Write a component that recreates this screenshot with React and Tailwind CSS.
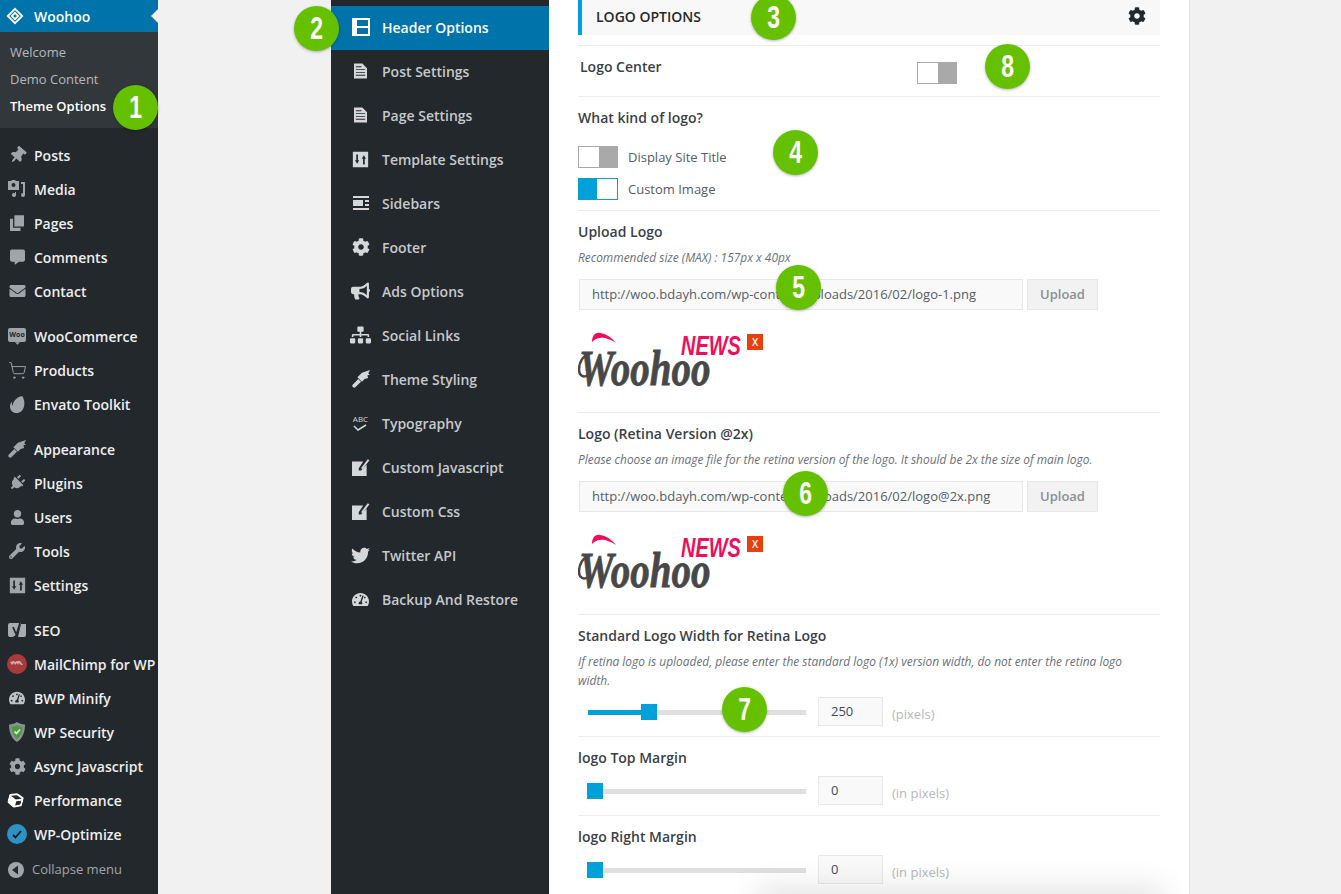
import React from 'react';
import {
  FaThumbtack, FaCommentAlt, FaEnvelope, FaPlug, FaUser, FaWrench, FaTachometerAlt,
  FaCog, FaBullhorn, FaSitemap, FaTwitter, FaCube,
} from 'react-icons/fa';
import { ShoppingCart } from 'lucide-react';

const Sliders = () => (
  <svg viewBox="0 0 20 20" className="w-[17px] h-[17px]">
    <path fill="currentColor" fillRule="evenodd" d="M1 1h18v18H1z M5 4v7H3.5L6 15l2.5-4H7V4z M13 16v-7h-1.5L14 5l2.5 4H15v7z" />
  </svg>
);

const Doc = () => (
  <svg viewBox="0 0 14 16" className="w-[13px] h-[16px]">
    <path fill="currentColor" fillRule="evenodd" d="M0 0h9l5 5v11H0z M2 3v1h6V3z M2 6v1h10V6z M2 9v1h10V9z M2 12v1h10v-1z" />
  </svg>
);

const Edit = () => (
  <svg viewBox="0 0 16 16" className="w-[18px] h-[18px]">
    <path fill="currentColor" d="M0 3h10L6 9v2h2l5-5v10H0z" />
    <path fill="currentColor" d="M8 9l6-8 1.5 1-6 8z" />
  </svg>
);

const Brush = () => (
  <svg viewBox="0 0 20 20" className="w-[18px] h-[18px]">
    <path fill="currentColor" d="M1 16l6-6 3 3-6 6a2 2 0 01-3-3z M6 8l5-5 9-3-2 4 2 1-3 1 1 3-4 1-3 3z" />
  </svg>
);

const Cards = () => (
  <svg viewBox="0 0 16 18" className="w-[14px] h-[16px]">
    <path fill="currentColor" d="M5 0h11v13H5z M0 4h3.5v10.5H12V18H0z" />
  </svg>
);

const Media = () => (
  <svg viewBox="0 0 18 18" className="w-[18px] h-[18px]">
    <path fill="currentColor" fillRule="evenodd" d="M0 1h3l1-1h3l1 1h3v9H0z M5.5 3a2 2 0 100 4 2 2 0 000-4z" />
    <path fill="currentColor" d="M13 2h4v13a2 2 0 11-2-2V4h-2z M7 12l1 0v3a2 2 0 11-1-1.700z" />
  </svg>
);

const Woo = () => (
  <span className="flex flex-col items-center">
    <span className="w-[18px] h-[14px] rounded-[2px] bg-[#9ea3a8] text-[#23282d] text-[7px] font-bold leading-[14px] text-center">Woo</span>
    <svg viewBox="0 0 6 3" className="w-[5px] h-[3px]"><path fill="#9ea3a8" d="M0 0h6L3 3z" /></svg>
  </span>
);

const Leaf = () => (
  <svg viewBox="0 0 16 18" className="w-[15px] h-[17px]">
    <path fill="currentColor" d="M13 0c2 3 3 7 2 11-1 4-4 7-8 7-4 0-7-3-7-7 0-2 1-4 2-5 0 2 0 4 1 4 0-4 4-9 10-10z" />
  </svg>
);

const Seo = () => (
  <svg viewBox="0 0 18 20" className="w-[18px] h-[20px]">
    <path fill="#a8abae" d="M2 3h11l-5 14H2a2 2 0 01-2-2V5a2 2 0 012-2z M13 4h5v11a2 2 0 01-2 2h-6z" />
    <path fill="none" stroke="#23282d" strokeWidth="1.8" d="M5 7l3 7 M12 3l-4 13-3 2" />
  </svg>
);

const Chimp = () => (
  <svg viewBox="0 0 20 20" className="w-[20px] h-[20px]">
    <circle cx="10" cy="10" r="10" fill="#a83a3c" />
    <path fill="#cfa9a9" d="M3 8l4-1 1 1 2-1 3 0 3 4h-2l-2-2-1 2-1-2-2 2-1-2-2 2z" />
  </svg>
);

const Shield = () => (
  <svg viewBox="0 0 16 20" className="w-[16px] h-[20px]">
    <path fill="#8b9094" d="M8 0c2 1.5 5 2.5 8 2.5C16 11 13 17 8 20 3 17 0 11 0 2.5 3 2.5 6 1.5 8 0z" />
    <path fill="#4c9a3c" d="M8 3c1.5 1 3 1.5 5.5 2C13 10 11.5 14.5 8 17 4.5 14.5 3 10 2.5 5 5 4.5 6.5 4 8 3z" />
    <path fill="none" stroke="#d7e8d3" strokeWidth="1.8" d="M5.5 9.5l2 2 3.5-4" />
  </svg>
);

const Optimize = () => (
  <svg viewBox="0 0 20 20" className="w-[20px] h-[20px]">
    <circle cx="10" cy="10" r="10" fill="#2d93c4" />
    <path fill="none" stroke="#14181c" strokeWidth="1.8" d="M6 11l2.5 2.5L14 7" />
  </svg>
);

const CollapseIcon = () => (
  <svg viewBox="0 0 16 16" className="w-[16px] h-[16px]">
    <circle cx="8" cy="8" r="8" fill="#a0a5aa" />
    <path fill="#23282d" d="M10 3.5v9L4 8z" />
  </svg>
);

const HeaderIcon = () => (
  <svg viewBox="0 0 18 18" className="w-[18px] h-[18px]">
    <path fill="currentColor" fillRule="evenodd" d="M0 0h18v18H0z M5 2v6h11V2z M5 10v6h11v-6z" />
  </svg>
);

const SidebarsIcon = () => (
  <svg viewBox="0 0 16 14" className="w-[16px] h-[14px]">
    <path fill="currentColor" d="M0 0h16v2H0z M0 4h10v6H0z M12 4h4v2h-4z M12 8h4v2h-4z M0 12h16v2H0z" />
  </svg>
);

const Abc = () => (
  <span className="flex flex-col items-center leading-none">
    <span className="text-[8px] font-normal h-[9px]">ABC</span>
    <svg viewBox="0 0 14 7" className="w-[14px] h-[7px]"><path fill="none" stroke="currentColor" strokeWidth="1.5" d="M1 2l4 4 8-5" /></svg>
  </span>
);

// wp admin menu, split in groups
const menuGroups = [
  [
    ['Posts', <FaThumbtack className="w-[17px] h-[17px] rotate-[40deg]" />],
    ['Media', <Media />],
    ['Pages', <Cards />],
    ['Comments', <FaCommentAlt className="w-[15px] h-[16px]" />],
    ['Contact', <FaEnvelope className="w-[17px] h-[16px]" />],
  ],
  [
    ['WooCommerce', <Woo />],
    ['Products', <ShoppingCart className="w-[19px] h-[19px]" strokeWidth={1.2} />],
    ['Envato Toolkit', <Leaf />],
  ],
  [
    ['Appearance', <Brush />],
    ['Plugins', <FaPlug className="w-[16px] h-[16px] rotate-[45deg]" />],
    ['Users', <FaUser className="w-[15px] h-[15px]" />],
    ['Tools', <FaWrench className="w-[16px] h-[16px]" />],
    ['Settings', <Sliders />],
  ],
  [
    ['SEO', <Seo />],
    ['MailChimp for WP', <Chimp />],
    ['BWP Minify', <FaTachometerAlt className="w-[16px] h-[16px] text-[#c0c3c6]" />],
    ['WP Security', <Shield />],
    ['Async Javascript', <FaCog className="w-[17px] h-[17px]" />],
    ['Performance', <FaCube className="w-[15px] h-[15px] text-white -ml-[4px] rotate-[15deg]" />],
    ['WP-Optimize', <Optimize />],
  ],
];

const panelItems = [
  ['Post Settings', <Doc />],
  ['Page Settings', <Doc />],
  ['Template Settings', <Sliders />],
  ['Sidebars', <SidebarsIcon />],
  ['Footer', <FaCog className="w-[18px] h-[18px]" />],
  ['Ads Options', <FaBullhorn className="w-[19px] h-[18px]" />],
  ['Social Links', <FaSitemap className="w-[21px] h-[18px]" />],
  ['Theme Styling', <Brush />],
  ['Typography', <Abc />],
  ['Custom Javascript', <Edit />],
  ['Custom Css', <Edit />],
  ['Twitter API', <FaTwitter className="w-[19px] h-[19px]" />],
  ['Backup And Restore', <FaTachometerAlt className="w-[17px] h-[17px]" />],
];

const Badge = ({ n, className }) => (
  <div className={`absolute w-[45px] h-[45px] rounded-full bg-[#65c100] shadow-[0_1px_3px_rgba(0,0,0,0.3)] text-white flex items-center justify-center z-10 ${className}`}>
    <span className="font-['Liberation_Sans'] font-bold text-[31px] leading-none scale-x-[0.74]">{n}</span>
  </div>
);

const Toggle = ({ on }) => (
  on ? (
    <div className="w-[40px] h-[22px] border border-[#00a0d8] flex bg-white shrink-0">
      <div className="w-[18px] bg-[#00a0d8]" />
    </div>
  ) : (
    <div className="w-[40px] h-[22px] border border-[#a9a9a9] flex justify-end bg-white shrink-0">
      <div className="w-[18px] bg-[#a9a9a9]" />
    </div>
  )
);

const Logo = () => (
  <div className="flex items-start mt-[20px] h-[60px]">
    <svg viewBox="0 0 165 68" className="w-[165px] h-[68px] shrink-0">
      <path fill="#ee0f5c" d="M14 12c0-6 3-10 8-9 7 1 12 5 16 10-6-4-12-6-16-5-3 0-6 2-8 4z" />
      <path fill="none" stroke="#484848" strokeWidth="2.5" d="M12 24c-7 1-11 8-11 16 0 6 5 8 9 5" />
      <text transform="translate(1 55) scale(1 1.3)" fontFamily="Liberation Serif" fontStyle="italic" fontWeight="700" fontSize="39" fill="#484848" stroke="#484848" strokeWidth="0.6">Woohoo</text>
      <text transform="translate(103 25) scale(0.74 1)" fontFamily="Liberation Sans" fontStyle="italic" fontWeight="700" fontSize="27" fill="#ee0f5c">NEWS</text>
    </svg>
    <div className="ml-[4px] mt-[4px] w-[16px] h-[16px] bg-[#e8400c] text-white text-[10px] leading-[16px] text-center font-semibold">X</div>
  </div>
);

const UploadField = ({ value }) => (
  <div className="flex mt-[12px] ml-[1px]">
    <div className="w-[444px] h-[31px] border border-[#e8e8e8] bg-[#f9f9f9] text-[13px] leading-[29px] pl-[12px] text-[#555d66]">{value}</div>
    <div className="ml-[4px] w-[71px] h-[31px] border border-[#e8e8e8] bg-[#f2f2f2] text-[#8b8f94] text-[13px] font-semibold leading-[29px] text-center">Upload</div>
  </div>
);

const SliderRow = ({ pos, value, unit, mt }) => (
  <div className={`flex items-center ${mt}`}>
    <div className="relative w-[218px] h-[5px] mt-[2px] bg-[#dfdfdf] ml-[10px]">
      <div className="h-full bg-[#00a0d8]" style={{ width: pos }} />
      <div className="absolute top-[-6px] w-[16px] h-[16px] bg-[#00a0d8]" style={{ left: pos === 0 ? -1 : pos }} />
    </div>
    <div className="ml-[12px] w-[65px] h-[29px] border border-[#e8e8e8] bg-[#f9f9f9] text-[13px] leading-[27px] pl-[12px] text-[#3f4a58]">{value}</div>
    <span className="ml-[9px] mt-[7px] text-[13px] text-[#b5b8bc]">{unit}</span>
  </div>
);

const Title = ({ children }) => (
  <div className="text-[14px] font-semibold leading-[18px] text-[#3b3f48]">{children}</div>
);

const Desc = ({ children }) => (
  <p className="text-[11.93px] italic leading-[19px] text-[#6b7078]">{children}</p>
);

export default function App() {
  return (
    <div className="relative w-[1341px] h-[894px] overflow-hidden flex bg-[#f1f1f1] font-['Open_Sans',sans-serif]">
      {/* WP admin menu */}
      <aside className="w-[158px] shrink-0 bg-[#23282d] text-[14px] font-semibold text-[#eeeeee]">
        <div className="relative h-[32px] bg-[#0073aa] flex items-center text-white">
          <svg viewBox="0 0 20 20" className="w-[18px] h-[18px] ml-[6px] mr-[10px]">
            <path fill="none" stroke="#fff" strokeWidth="2" d="M10 2l8 8-8 8-8-8z M10 6.5l3.5 3.5-3.5 3.5L6.5 10z" />
          </svg>
          Woohoo
          <div className="absolute right-0 top-[9px] border-y-[7px] border-y-transparent border-r-[7px] border-r-[#f1f1f1]" />
        </div>
        <div className="h-[96px] bg-[#32373c] pt-[7px] text-[13px] font-normal text-[#b4b9be] pl-[10px]">
          <div className="h-[27px] leading-[27px]">Welcome</div>
          <div className="h-[27px] leading-[27px]">Demo Content</div>
          <div className="h-[27px] leading-[27px] text-white font-semibold">Theme Options</div>
        </div>
        {menuGroups.map((group, i) => (
          <div key={i} className="mt-[11px]">
            {group.map(([label, icon]) => (
              <div key={label} className="h-[34px] pb-[2px] flex items-center whitespace-nowrap">
                <span className="w-[34px] flex justify-center text-[#a0a5aa] shrink-0">{icon}</span>
                {label}
              </div>
            ))}
          </div>
        ))}
        <div className="h-[34px] pt-[2px] flex items-center text-[13px] font-normal text-[#a0a5aa]">
          <span className="w-[32px] flex justify-center shrink-0"><CollapseIcon /></span>
          Collapse menu
        </div>
      </aside>

      {/* options tabs */}
      <nav className="ml-[173px] w-[218px] shrink-0 bg-[#23282d] pt-[6px] text-[14px] font-semibold text-[#c6c9cc]">
        <div className="h-[44px] pb-[2px] bg-[#0073aa] text-white flex items-center">
          <span className="w-[59px] -mr-[8px] flex justify-center shrink-0"><HeaderIcon /></span>
          Header Options
        </div>
        {panelItems.map(([label, icon]) => (
          <div key={label} className="h-[44px] pb-[2px] flex items-center">
            <span className="w-[59px] -mr-[8px] flex justify-center shrink-0 text-[#d5d7d9]">{icon}</span>
            {label}
          </div>
        ))}
      </nav>

      {/* settings form */}
      <main className="w-[641px] shrink-0 bg-white border-r border-[#e2e2e2] pl-[29px] pr-[29px] h-[894px]">
        <div className="h-[35px] pb-[3px] bg-[#f8f8f8] border-l-4 border-[#00a0d8] flex items-center justify-between pl-[14px] pr-[14px]">
          <span className="text-[14px] font-semibold text-[#23282d]">LOGO OPTIONS</span>
          <FaCog className="w-[18px] h-[18px] text-[#23282d]" />
        </div>
        <div className="mt-[10px] h-[52px] border-y border-[#ececec] flex items-center pl-[2px] pb-[8px]">
          <div className="w-[337px]"><Title>Logo Center</Title></div>
          <div className="mt-[12px]"><Toggle /></div>
        </div>

        <div className="h-[114px] border-b border-[#ececec] pt-[12px]">
          <Title>What kind of logo?</Title>
          <div className="mt-[19px] flex items-center gap-[10px] text-[13px] text-[#555d66]"><Toggle /> <span className="mt-[2px]">Display Site Title</span></div>
          <div className="mt-[10px] flex items-center gap-[10px] text-[13px] text-[#555d66]"><Toggle on /> <span className="mt-[2px]">Custom Image</span></div>
        </div>

        <div className="h-[202px] border-b border-[#ececec] pt-[12px]">
          <Title>Upload Logo</Title>
          <div className="mt-[7px]"><Desc>Recommended size (MAX) : 157px x 40px</Desc></div>
          <UploadField value="http://woo.bdayh.com/wp-content/uploads/2016/02/logo-1.png" />
          <Logo />
        </div>

        <div className="h-[202px] border-b border-[#ececec] pt-[12px]">
          <Title>Logo (Retina Version @2x)</Title>
          <div className="mt-[7px]"><Desc>Please choose an image file for the retina version of the logo. It should be 2x the size of main logo.</Desc></div>
          <UploadField value="http://woo.bdayh.com/wp-content/uploads/2016/02/logo@2x.png" />
          <Logo />
        </div>

        <div className="h-[122px] border-b border-[#ececec] pt-[12px]">
          <Title>Standard Logo Width for Retina Logo</Title>
          <div className="mt-[7px]"><Desc>If retina logo is uploaded, please enter the standard logo (1x) version width, do not enter the retina logo<br />width.</Desc></div>
          <SliderRow pos={53} value="250" unit="(pixels)" mt="mt-[7px]" />
        </div>

        <div className="h-[79px] border-b border-[#ececec] pt-[12px]">
          <Title>logo Top Margin</Title>
          <SliderRow pos={0} value="0" unit="(in pixels)" mt="mt-[9px]" />
        </div>

        <div className="pt-[12px]">
          <Title>logo Right Margin</Title>
          <SliderRow pos={0} value="0" unit="(in pixels)" mt="mt-[9px]" />
        </div>
      </main>

      {/* shadow of a floating bar below the fold */}
      <div className="absolute left-[770px] w-[380px] top-[900px] h-[20px] shadow-[0_0_30px_14px_rgba(0,0,0,0.1)]" />

      <Badge n="1" className="left-[113px] top-[85px]" />
      <Badge n="2" className="left-[294px] top-[6px]" />
      <Badge n="3" className="left-[751px] top-[-5px]" />
      <Badge n="4" className="left-[773px] top-[130px]" />
      <Badge n="5" className="left-[776px] top-[265px]" />
      <Badge n="6" className="left-[783px] top-[471px]" />
      <Badge n="7" className="left-[722px] top-[687px]" />
      <Badge n="8" className="left-[985px] top-[44px]" />
    </div>
  );
}
